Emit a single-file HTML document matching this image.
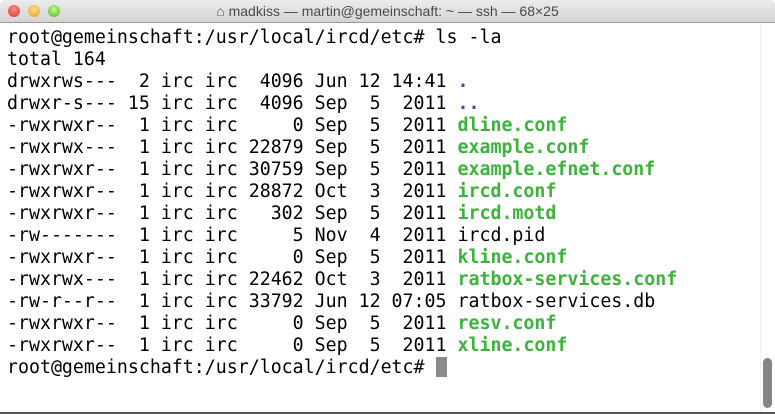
<!DOCTYPE html>
<html><head><style>
html,body{margin:0;padding:0;width:775px;height:414px;overflow:hidden;background:#fff}
.title{position:absolute;left:0;top:0;width:775px;height:22px;background:linear-gradient(#ececec,#d4d4d4);border-bottom:1px solid #9a9a9a;font:14px "Liberation Sans","DejaVu Sans",sans-serif;color:#4a4a4a;text-align:center;line-height:22px;border-radius:5px 5px 0 0}
.dot{position:absolute;top:5px;width:12px;height:12px;border-radius:50%}
pre{position:absolute;left:7px;top:27px;margin:0;font-family:"DejaVu Sans Mono","Liberation Mono",monospace;font-size:18.25px;line-height:22px;color:#000}
.g{color:#3cb43c;font-weight:bold}
.b{color:#3a4fb0;font-weight:bold}
.cur{display:inline-block;width:11px;height:20px;background:#8a8a8a;vertical-align:-4px}
.sb{position:absolute;left:763px;top:358px;width:9px;height:50px;background:#858585;border-radius:5px}
.edge{position:absolute;left:760px;top:23px;width:1px;height:391px;background:#f0f0f0}
.bottom{position:absolute;left:0;top:412px;width:775px;height:2px;background:#555}
</style></head><body>
<div class="title">
<div class="dot" style="left:8px;background:radial-gradient(circle at 50% 35%,#f88,#d23a30)"></div>
<div class="dot" style="left:28px;background:radial-gradient(circle at 50% 35%,#fd8,#e0a020)"></div>
<div class="dot" style="left:48px;background:radial-gradient(circle at 50% 35%,#bf8,#5aa82a)"></div>
<span style="color:#8a4a2a">⌂</span> madkiss — martin@gemeinschaft: ~ — ssh — 68×25
</div>
<div class="edge"></div>
<pre>root@gemeinschaft:/usr/local/ircd/etc# ls -la
total 164
drwxrws---  2 irc irc  4096 Jun 12 14:41 <span class="b">.</span>
drwxr-s--- 15 irc irc  4096 Sep  5  2011 <span class="b">..</span>
-rwxrwxr--  1 irc irc     0 Sep  5  2011 <span class="g">dline.conf</span>
-rwxrwx---  1 irc irc 22879 Sep  5  2011 <span class="g">example.conf</span>
-rwxrwxr--  1 irc irc 30759 Sep  5  2011 <span class="g">example.efnet.conf</span>
-rwxrwxr--  1 irc irc 28872 Oct  3  2011 <span class="g">ircd.conf</span>
-rwxrwxr--  1 irc irc   302 Sep  5  2011 <span class="g">ircd.motd</span>
-rw-------  1 irc irc     5 Nov  4  2011 ircd.pid
-rwxrwxr--  1 irc irc     0 Sep  5  2011 <span class="g">kline.conf</span>
-rwxrwx---  1 irc irc 22462 Oct  3  2011 <span class="g">ratbox-services.conf</span>
-rw-r--r--  1 irc irc 33792 Jun 12 07:05 ratbox-services.db
-rwxrwxr--  1 irc irc     0 Sep  5  2011 <span class="g">resv.conf</span>
-rwxrwxr--  1 irc irc     0 Sep  5  2011 <span class="g">xline.conf</span>
root@gemeinschaft:/usr/local/ircd/etc# <span class="cur"></span></pre>
<div class="sb"></div>
<div class="bottom"></div>
</body></html>
